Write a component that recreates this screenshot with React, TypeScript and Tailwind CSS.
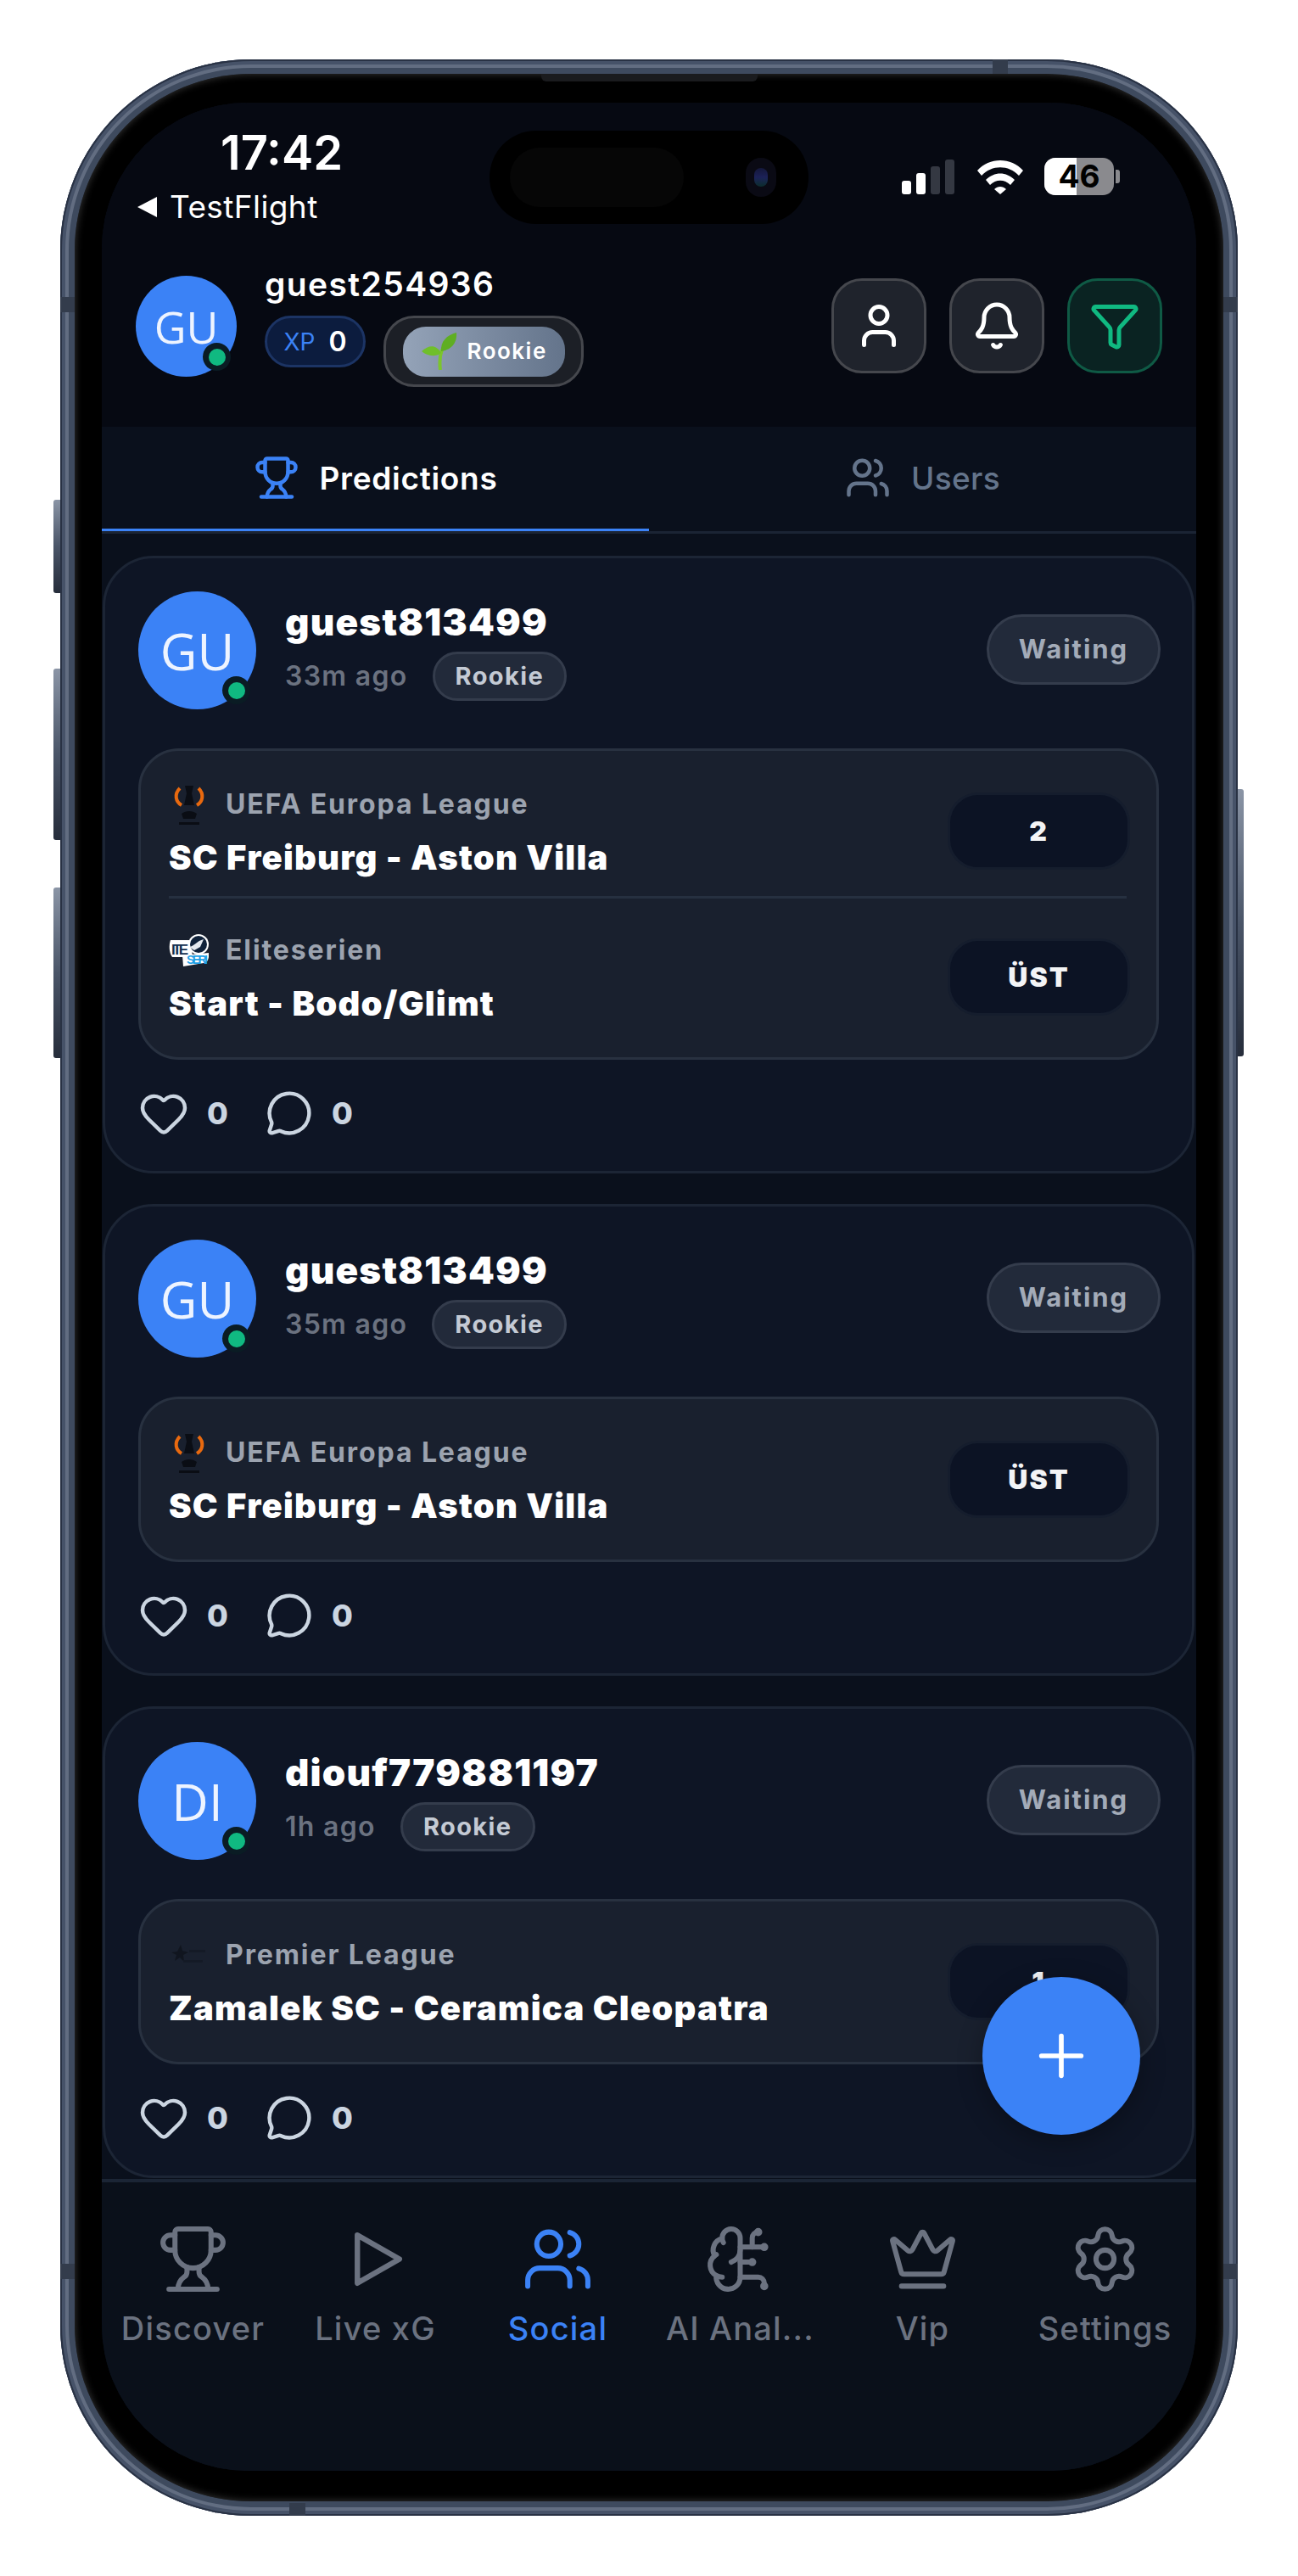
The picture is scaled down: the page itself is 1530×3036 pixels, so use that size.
import React from "react";
import {
  Bell,
  BrainCircuit,
  Crown,
  Filter,
  Heart,
  MessageCircle,
  Plus,
  Settings,
  Trophy,
  User,
  Users,
} from "lucide-react";

type Match = {
  league: string;
  logo: "uefa" | "elite" | "premier";
  title: string;
  pick: string;
};

type Post = {
  initials: string;
  name: string;
  time: string;
  matches: Match[];
};

const posts: Post[] = [
  {
    initials: "GU",
    name: "guest813499",
    time: "33m ago",
    matches: [
      { league: "UEFA Europa League", logo: "uefa", title: "SC Freiburg - Aston Villa", pick: "2" },
      { league: "Eliteserien", logo: "elite", title: "Start - Bodo/Glimt", pick: "ÜST" },
    ],
  },
  {
    initials: "GU",
    name: "guest813499",
    time: "35m ago",
    matches: [{ league: "UEFA Europa League", logo: "uefa", title: "SC Freiburg - Aston Villa", pick: "ÜST" }],
  },
  {
    initials: "DI",
    name: "diouf779881197",
    time: "1h ago",
    matches: [{ league: "Premier League", logo: "premier", title: "Zamalek SC - Ceramica Cleopatra", pick: "1" }],
  },
];

function LeagueLogo({ logo }: { logo: Match["logo"] }) {
  if (logo === "uefa") {
    return (
      <svg viewBox="0 0 48 48" className="h-[48px] w-[48px] shrink-0">
        <path d="M13 5 C6 12 8 21 15 25" fill="none" stroke="#e8690f" strokeWidth="4" />
        <path d="M35 5 C42 12 40 21 33 25" fill="none" stroke="#e8690f" strokeWidth="4" />
        <path d="M19 2h10l-2 9 3 14H18l3-14z" fill="#0a0d14" />
        <path d="M15 35c5-4 13-4 18 0l-2 6H17z" fill="#0a0d14" />
        <rect x="12" y="45" width="24" height="3" fill="#0a0d14" />
      </svg>
    );
  }
  if (logo === "elite") {
    return (
      <svg viewBox="0 0 48 40" className="h-[40px] w-[48px] shrink-0">
        <path d="M2 8h24l2 20H4C0 22 0 14 2 8z" fill="#fff" />
        <text x="3" y="25" fontSize="17" fontWeight="700" fontFamily="'Liberation Sans',sans-serif" fill="#14304f" textLength="20">
          ITE
        </text>
        <circle cx="35" cy="13" r="12" fill="#fff" />
        <circle cx="35" cy="13" r="10" fill="#10223a" />
        <path d="M24 16c6-1 9-7 17-9l-4 9-7 4z" fill="#e5e9ef" />
        <path d="M16 26l31-3v5c-1 5-3 7-6 7l-24 4z" fill="#fff" />
        <text x="21" y="36" fontSize="14" fontWeight="700" fontFamily="'Liberation Sans',sans-serif" fill="#1ea0e6" textLength="25">
          SERI
        </text>
      </svg>
    );
  }
  return (
    <svg viewBox="0 0 48 30" className="h-[30px] w-[48px] shrink-0">
      <path d="M14 3l2 7 7 2-6 3 1 8-5-5-6 4 2-7-6-3 7-1z" fill="#10151f" />
      <rect x="24" y="9" width="19" height="3" fill="#141a26" />
      <rect x="17" y="21" width="23" height="3" fill="#141a26" />
    </svg>
  );
}

function PostCard({ post }: { post: Post }) {
  return (
    <div className="rounded-[60px] border-[3px] border-[#1c2535] bg-[#0e1525] pb-[38px] pl-[39px] pr-[37px] pt-[39px]">
      <div className="flex items-start">
        <div className="relative flex h-[139px] w-[139px] shrink-0 items-center justify-center rounded-full bg-[#3b82f6] font-['Open_Sans',sans-serif] text-[60px] font-normal leading-none text-[#eef4ff]">
          {post.initials}
          <span className="absolute bottom-[6px] right-[7px] flex h-[33px] w-[33px] items-center justify-center rounded-full bg-[#0a1c24]">
            <span className="h-[20px] w-[20px] rounded-full bg-[#10b981]" />
          </span>
        </div>
        <div className="ml-[34px] flex-1 pt-[10px]">
          <div className="text-[44px] font-black leading-[52px] tracking-[1.2px] text-white">{post.name}</div>
          <div className="mt-[9px] flex items-center">
            <span className="text-[32px] font-semibold leading-none tracking-[1.3px] text-[#6b7280]">{post.time}</span>
            <span className="ml-[29px] flex h-[58px] items-center rounded-full border-[3px] border-[#343c4c] bg-[#222a3a] px-[24px] text-[29px] font-bold tracking-[1.4px] text-[#c4cad4]">
              Rookie
            </span>
          </div>
        </div>
        <span className="mt-[27px] flex h-[83px] w-[205px] shrink-0 items-center justify-center rounded-full border-[3px] border-[#343c4c] bg-[#222a3a] text-[31px] font-bold tracking-[2px] text-[#a3abb8]">
          Waiting
        </span>
      </div>

      <div className="mr-[2px] mt-[46px] rounded-[48px] border-[3px] border-[#283140] bg-[#19202e] py-[39px] pl-[33px] pr-[31px]">
        {post.matches.map((match, i) => (
          <div key={match.league}>
            {i > 0 ? <div className="mb-[37px] mr-[4px] mt-[21px] h-[3px] bg-[#263040]" /> : null}
            <div className="flex items-center justify-between">
              <div className="min-w-0">
                <div className="flex h-[48px] items-center">
                  <span className="flex w-[67px] shrink-0 items-center">
                    <LeagueLogo logo={match.logo} />
                  </span>
                  <span className="text-[32px] font-bold leading-none tracking-[1.9px] text-[#9ca3af]">{match.league}</span>
                </div>
                <div className="mt-[15px] text-[40px] font-black leading-[48px] tracking-[1.2px] text-white">{match.title}</div>
              </div>
              <span className="flex h-[91px] w-[215px] shrink-0 items-center justify-center rounded-[36px] border-[3px] border-[#151d2d] bg-[#0c1324] text-[32px] font-black tracking-[2px] text-[#f3f4f6]">
                {match.pick}
              </span>
            </div>
          </div>
        ))}
      </div>

      <div className="mt-[33px] flex items-center text-[#cbd5e1]">
        <Heart size={60} strokeWidth={1.8} />
        <span className="ml-[21px] w-[30px] text-[36px] font-extrabold leading-none">0</span>
        <span className="ml-[39px] flex">
          <MessageCircle size={56} strokeWidth={1.9} />
        </span>
        <span className="ml-[22px] text-[36px] font-extrabold leading-none">0</span>
      </div>
    </div>
  );
}

function PlayOutline() {
  return (
    <svg width="85" height="85" viewBox="0 0 24 24" fill="none" stroke="currentColor" strokeWidth="1.8" strokeLinejoin="round">
      <polygon points="6 4 20 12 6 20" />
    </svg>
  );
}

const tabs = [
  { label: "Discover", icon: <Trophy size={85} strokeWidth={1.7} /> },
  { label: "Live xG", icon: <PlayOutline /> },
  { label: "Social", icon: <Users size={85} strokeWidth={1.7} />, active: true },
  { label: "AI Anal...", icon: <BrainCircuit size={85} strokeWidth={1.7} /> },
  { label: "Vip", icon: <Crown size={85} strokeWidth={1.7} /> },
  { label: "Settings", icon: <Settings size={85} strokeWidth={1.7} /> },
];

export default function App() {
  return (
    <div className="h-[3036px] w-[1530px] overflow-hidden bg-white pl-[71px] pt-[70px] font-['Inter',sans-serif]">
      {/* phone body */}
      <div className="relative h-[2895px] w-[1388px] rounded-[225px] bg-[#3e4a5e] p-[17px] shadow-[inset_0_0_0_2px_#293244,inset_0_0_0_6px_#465268,inset_0_0_0_10px_#626d81]">
        {/* side buttons */}
        <span className="absolute left-[-8px] top-[519px] h-[110px] w-[8px] rounded-l-[3px] bg-gradient-to-b from-[#8b95a6] via-[#4a5568] to-[#262d3b]" />
        <span className="absolute left-[-8px] top-[718px] h-[202px] w-[8px] rounded-l-[3px] bg-gradient-to-b from-[#8b95a6] via-[#4a5568] to-[#262d3b]" />
        <span className="absolute left-[-8px] top-[976px] h-[201px] w-[8px] rounded-l-[3px] bg-gradient-to-b from-[#8b95a6] via-[#4a5568] to-[#262d3b]" />
        <span className="absolute right-[-7px] top-[860px] h-[315px] w-[7px] rounded-r-[3px] bg-gradient-to-b from-[#8b95a6] via-[#4a5568] to-[#262d3b]" />

        {/* antenna bands */}
        <span className="absolute left-[1099px] top-0 h-[17px] w-[18px] bg-[#333c4c]" />
        <span className="absolute bottom-0 left-[270px] h-[15px] w-[19px] bg-[#333c4c]" />
        <span className="absolute left-0 top-[280px] h-[18px] w-[17px] bg-[#333c4c]" />
        <span className="absolute right-0 top-[280px] h-[18px] w-[17px] bg-[#333c4c]" />
        <span className="absolute left-0 top-[2598px] h-[18px] w-[17px] bg-[#333c4c]" />
        <span className="absolute right-0 top-[2598px] h-[18px] w-[17px] bg-[#333c4c]" />

        {/* bezel */}
        <div className="relative h-full w-full rounded-[208px] bg-black pl-[32px] pr-[32px] pt-[34px] shadow-[inset_0_0_10px_#3a3a3a]">
          <span className="absolute left-[550px] top-0 h-[9px] w-[255px] rounded-b-[6px] bg-[#1a1b1e]" />
          {/* screen */}
          <div className="relative flex h-[2791px] w-[1290px] flex-col overflow-hidden rounded-[172px] bg-[#0a101c]">
            <div className="h-[382px] shrink-0 bg-[#060912]">
              <div className="flex pt-[33px]">
                <div className="w-[457px] pl-[42px]">
                  <div className="pl-[98px] text-[56px] font-semibold leading-[52px] text-white">17:42</div>
                  <div className="mt-[18px] flex items-center">
                    <svg width="23" height="24" viewBox="0 0 23 24" className="mr-[15px]">
                      <path d="M23 0v24L0 12z" fill="#fff" />
                    </svg>
                    <span className="text-[37px] leading-[40px] tracking-[0.4px] text-white">TestFlight</span>
                  </div>
                </div>
                <div className="flex h-[110px] w-[376px] items-center justify-between rounded-full bg-black pl-[24px] pr-[38px]">
                  <span className="h-[70px] w-[205px] rounded-full bg-[#060606]" />
                  <span className="flex h-[46px] w-[36px] items-center justify-center rounded-full bg-[#0a0a14]">
                    <span className="h-[22px] w-[16px] rounded-full bg-gradient-to-b from-[#14173a] via-[#1c2158] to-[#0c2c2c]" />
                  </span>
                </div>
                <div className="flex flex-1 items-center pb-[2px] pl-[110px]">
                  <div className="flex h-[41px] items-end gap-[6px]">
                    <span className="h-[16px] w-[11px] rounded-[3px] bg-white" />
                    <span className="h-[25px] w-[11px] rounded-[3px] bg-white" />
                    <span className="h-[33px] w-[11px] rounded-[3px] bg-[#343842]" />
                    <span className="h-[41px] w-[11px] rounded-[3px] bg-[#343842]" />
                  </div>
                  <svg width="56" height="41" viewBox="0 0 56 41" className="ml-[26px]">
                    <path d="M1 13C15 -3 41 -3 55 13l-5 6C38 6 18 6 6 19z" fill="#fff" />
                    <path d="M11 24c10-10 24-10 34 0l-5 6c-7-7-17-7-24 0z" fill="#fff" />
                    <path d="M21 35c4-4 10-4 14 0l-7 6z" fill="#fff" />
                  </svg>
                  <div className="relative ml-[24px] flex h-[44px] w-[82px] items-center justify-center overflow-hidden rounded-[13px] bg-[#8a8a8e] text-[37px] font-bold text-black">
                    <span className="absolute inset-y-0 left-0 w-[38px] bg-white" />
                    <span className="relative">46</span>
                  </div>
                  <span className="ml-[2px] h-[16px] w-[5px] rounded-r-[3px] bg-[#8a8a8e]" />
                </div>
              </div>

              <div className="mt-[48px] flex items-start pl-[40px] pr-[40px]">
                <div className="relative mt-[13px] flex h-[119px] w-[119px] shrink-0 items-center justify-center rounded-full bg-[#3b82f6] font-['Open_Sans',sans-serif] text-[52px] font-normal leading-none text-[#eef4ff]">
                  GU
                  <span className="absolute bottom-[7px] right-[7px] flex h-[33px] w-[33px] items-center justify-center rounded-full bg-[#0a1c24]">
                    <span className="h-[20px] w-[20px] rounded-full bg-[#10b981]" />
                  </span>
                </div>
                <div className="ml-[33px] flex-1">
                  <div className="text-[39px] font-semibold leading-[46px] tracking-[1.4px] text-white">guest254936</div>
                  <div className="mt-[14px] flex items-start gap-[21px]">
                    <span className="flex h-[61px] w-[119px] items-center justify-center gap-[16px] rounded-full border-[3px] border-[#1c3464] bg-[#0c1c3e]">
                      <span className="text-[28px] leading-none text-[#3b82f6]">XP</span>
                      <span className="text-[32px] font-semibold leading-none text-white">0</span>
                    </span>
                    <span className="flex h-[84px] w-[236px] items-center justify-center rounded-[36px] border-[3px] border-[#45474d] bg-[#1c1f26]">
                      <span className="flex h-[59px] w-[191px] items-center rounded-[27px] bg-gradient-to-r from-[#94a3b8] to-[#64748b] pl-[22px]">
                        <svg width="42" height="44" viewBox="0 0 42 44">
                          <path d="M22 44c-1-8-1-16 2-24" fill="none" stroke="#7cc52c" strokeWidth="4" />
                          <path d="M23 22C22 10 30 3 41 0c1 10-4 20-18 22z" fill="#5fae22" />
                          <path d="M23 24C17 14 9 14 0 22c7 6 16 7 23 2z" fill="#6fbf2a" />
                        </svg>
                        <span className="ml-[12px] text-[26px] font-semibold leading-none tracking-[1.5px] text-white">Rookie</span>
                      </span>
                    </span>
                  </div>
                </div>
                <div className="mt-[16px] flex gap-[27px]">
                  <span className="flex h-[112px] w-[112px] items-center justify-center rounded-[36px] border-[3px] border-[#45474d] bg-[#1f232c] text-white">
                    <User size={60} strokeWidth={2} />
                  </span>
                  <span className="flex h-[112px] w-[112px] items-center justify-center rounded-[36px] border-[3px] border-[#45474d] bg-[#1f232c] text-white">
                    <Bell size={60} strokeWidth={2} />
                  </span>
                  <span className="flex h-[112px] w-[112px] items-center justify-center rounded-[36px] border-[3px] border-[#0f5a45] bg-[#0a2322] text-[#10b981]">
                    <Filter size={60} strokeWidth={2} />
                  </span>
                </div>
              </div>
            </div>

            {/* tabs */}
            <div className="flex h-[126px] shrink-0 border-b-[3px] border-[#1b2434] bg-[#0a101c]">
              <div className="flex w-[645px] items-center justify-center gap-[24px] border-b-[3px] border-[#3b82f6] text-white">
                <Trophy size={54} strokeWidth={2} className="text-[#3b82f6]" />
                <span className="text-[37px] font-semibold leading-none tracking-[0.7px]">Predictions</span>
              </div>
              <div className="flex flex-1 items-center justify-center gap-[24px] pb-[3px] text-[#64748b]">
                <Users size={54} strokeWidth={2} />
                <span className="text-[37px] font-medium leading-none tracking-[0.3px]">Users</span>
              </div>
            </div>

            {/* feed */}
            <div className="relative flex min-h-0 flex-1 flex-col gap-[36px] overflow-hidden pl-[1px] pr-[2px] pt-[26px]">
              {posts.map((post) => (
                <PostCard key={post.time} post={post} />
              ))}
              <button
                type="button"
                className="absolute bottom-[52px] right-[66px] flex h-[186px] w-[186px] items-center justify-center rounded-full bg-[#3b82f6] text-white shadow-[0_8px_30px_rgba(0,0,0,0.3)]"
              >
                <Plus size={80} strokeWidth={1.7} />
              </button>
            </div>

            {/* bottom nav */}
            <div className="grid h-[344px] shrink-0 grid-cols-6 border-t-[4px] border-[#1b2535] bg-[#0a101a] pt-[48px]">
              {tabs.map((tab) => (
                <div
                  key={tab.label}
                  className={`flex flex-col items-center ${tab.active ? "text-[#3b82f6]" : "text-[#6b7280]"}`}
                >
                  {tab.icon}
                  <span className="mt-[15px] whitespace-nowrap text-[38px] font-medium leading-[48px] tracking-[1.2px]">{tab.label}</span>
                </div>
              ))}
            </div>
          </div>
        </div>
      </div>
    </div>
  );
}
